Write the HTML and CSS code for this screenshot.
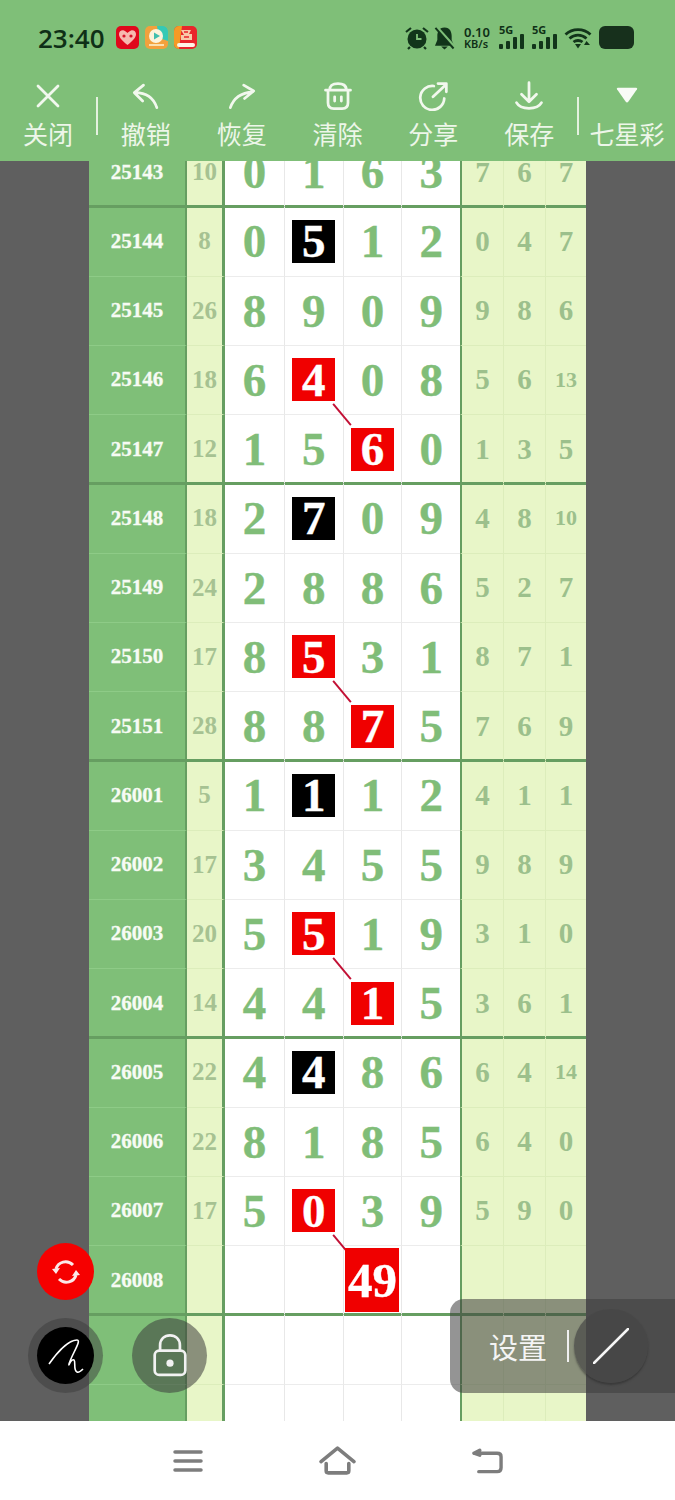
FILE: index.html
```html
<!DOCTYPE html>
<html lang="zh-CN">
<head>
  <meta charset="UTF-8" />
  <meta name="viewport" content="width=device-width, initial-scale=1.0"/>
  <title>七星彩</title>
  <link rel="stylesheet" href="styles.css">
</head>
<body>
  <header class="top">
    <div class="status">
      <span class="time">23:40</span>
      <div class="apps">
        <svg class="app" viewBox="0 0 23 23"><rect width="23" height="23" rx="5" fill="#e0081c"/><path d="M11.5 19 C5 14 3 11 3 8 C3 5 6 3.5 8 4.500 C10 5.500 11 6.500 11.500 7 C12 6.500 13 5.500 15 4.500 C17 3.500 20 5 20 8 C20 11 18 14 11.500 19Z" fill="#f7b9b0"/><circle cx="8" cy="10" r="1.600" fill="#d8142a"/><circle cx="15" cy="10" r="1.600" fill="#d8142a"/></svg>
        <svg class="app" viewBox="0 0 23 23"><rect width="23" height="23" rx="5" fill="#f3a13c"/><path d="M12 0 H18 a5 5 0 0 1 5 5 V15 L14 12Z" fill="#35c9b5"/><circle cx="11" cy="10" r="7" fill="#fdf3dc"/><path d="M9 6.500 L15 10 L9 13.500Z" fill="#41bfae"/><path d="M4 18 H19 V20 H4Z" fill="#fbe0ae"/></svg>
        <svg class="app" viewBox="0 0 23 23"><rect width="23" height="23" rx="5" fill="#e8252b"/><path d="M0 5 a5 5 0 0 1 5 -5 H8 L5 23 a5 5 0 0 1 -5 -5Z" fill="#f59a25"/><path d="M7 4 H17 L15 8 H18 V14 H7 V9 H10Z" fill="#f9c9a8"/><path d="M10 6 H14 M10 11 H15" stroke="#e8252b" stroke-width="1.500"/><rect x="3" y="17" width="18" height="4" rx="2" fill="#fff3e6"/></svg>
      </div>
      <div class="sys">
        <svg class="alarm" viewBox="0 0 24 24"><circle cx="12" cy="13" r="9.500" fill="#12351a"/><path d="M12 8 V13 H16.500" fill="none" stroke="#7fbf78" stroke-width="1.800"/><path d="M1 6 L6 2 M23 6 L18 2 M5 21 L3 23 M19 21 L21 23" stroke="#12351a" stroke-width="2.200"/></svg>
        <svg class="bell" viewBox="0 0 22 24"><path d="M11 1 C5 1 3.500 6 3.500 10 V14 L1 20 H21 L18.500 14 V10 C18.500 6 17 1 11 1Z M7.500 21 H14.500 L11 24Z" fill="#12351a"/><path d="M3 1 L21 21" stroke="#7fbf78" stroke-width="3.500"/><path d="M1.500 1.500 L20.500 23" stroke="#12351a" stroke-width="2"/></svg>
        <div class="speed"><span>0.10</span><span>KB/s</span></div>
        <div class="net">
          <span class="net-label">5G</span>
          <svg viewBox="0 0 26 16"><rect x="0" y="10" width="4" height="5" rx="1"/><rect x="7" y="7" width="4" height="8" rx="1"/><rect x="14" y="3" width="4" height="12" rx="1"/><rect x="21" y="0" width="4" height="15" rx="1"/></svg>
        </div>
        <div class="net">
          <span class="net-label">5G</span>
          <svg viewBox="0 0 26 16"><rect x="0" y="10" width="4" height="5" rx="1"/><rect x="7" y="7" width="4" height="8" rx="1"/><rect x="14" y="3" width="4" height="12" rx="1"/><rect x="21" y="0" width="4" height="15" rx="1"/></svg>
        </div>
        <svg class="wifi" viewBox="0 0 28 22"><path d="M1.500 7.500 C8.500 1 19.500 1 26.500 7.500 M5.500 11.500 C10.500 7 17.500 7 22.500 11.500 M9.500 15 C12 13 16 13 18.500 15" fill="none" stroke="#12351a" stroke-width="2.800"/><path d="M11 17 H17 L14 21.500Z" fill="#12351a"/><path d="M22.500 14 L26 18 H20Z" fill="#12351a"/></svg>
        <div class="battery"></div>
      </div>
    </div>
    <nav class="tools">
      <div class="tool">
        <svg viewBox="0 0 36 36"><path d="M6 6 L30 30 M30 6 L6 30"/></svg>
        <span>关闭</span>
      </div>
      <i class="sep"></i>
      <div class="tool">
        <svg viewBox="0 0 36 36"><path d="M31 32 C27 20 18 14 5 14 M15 5 L4 14 L14 24"/></svg>
        <span>撤销</span>
      </div>
      <div class="tool">
        <svg viewBox="0 0 36 36"><path d="M4 32 C8 20 17 14 31 13 M20 5 L32 12 L21 21"/></svg>
        <span>恢复</span>
      </div>
      <div class="tool">
        <svg viewBox="0 0 36 36"><path d="M8 11 C8 5 12 3 18 3 C24 3 28 5 28 11 M3 11 H33 M6 11 V26 C6 31 9 33 13 33 H23 C27 33 30 31 30 26 V11 M14 19 V24 M22 19 V24"/></svg>
        <span>清除</span>
      </div>
      <div class="tool">
        <svg viewBox="0 0 36 36"><path d="M19 6 A14.400 14.400 0 1 0 31.500 21 M18 19 L34 4 M24 3 H34 V13"/></svg>
        <span>分享</span>
      </div>
      <div class="tool">
        <svg viewBox="0 0 36 36"><path d="M18 2 V24 M9 16 L18 25 L27 16 M3 26 C8 35 28 35 33 26"/></svg>
        <span>保存</span>
      </div>
      <i class="sep"></i>
      <div class="tool">
        <svg viewBox="0 0 36 36"><path class="solid" d="M7 8 H29 C30 8 30.500 9 30 10 L19.500 25 C18.700 26 17.300 26 16.500 25 L6 10 C5.500 9 6 8 7 8Z"/></svg>
        <span>七星彩</span>
      </div>
    </nav>
  </header>

  <main class="main">
    <div class="sheet">
      <div class="row end"><b class="no">25143</b><b class="sum">10</b><b class="d">0</b><b class="d">1</b><b class="d">6</b><b class="d">3</b><b class="s">7</b><b class="s">6</b><b class="s">7</b></div>

      <div class="row"><b class="no">25144</b><b class="sum">8</b><b class="d">0</b><b class="d"><em class="mark black">5</em></b><b class="d">1</b><b class="d">2</b><b class="s">0</b><b class="s">4</b><b class="s">7</b></div>
      <div class="row"><b class="no">25145</b><b class="sum">26</b><b class="d">8</b><b class="d">9</b><b class="d">0</b><b class="d">9</b><b class="s">9</b><b class="s">8</b><b class="s">6</b></div>
      <div class="row"><b class="no">25146</b><b class="sum">18</b><b class="d">6</b><b class="d"><em class="mark red">4</em><svg class="link" viewBox="0 0 22 26"><path d="M1 1 L21 25"/></svg></b><b class="d">0</b><b class="d">8</b><b class="s">5</b><b class="s">6</b><b class="s small">13</b></div>
      <div class="row end"><b class="no">25147</b><b class="sum">12</b><b class="d">1</b><b class="d">5</b><b class="d"><em class="mark red">6</em></b><b class="d">0</b><b class="s">1</b><b class="s">3</b><b class="s">5</b></div>

      <div class="row"><b class="no">25148</b><b class="sum">18</b><b class="d">2</b><b class="d"><em class="mark black">7</em></b><b class="d">0</b><b class="d">9</b><b class="s">4</b><b class="s">8</b><b class="s small">10</b></div>
      <div class="row"><b class="no">25149</b><b class="sum">24</b><b class="d">2</b><b class="d">8</b><b class="d">8</b><b class="d">6</b><b class="s">5</b><b class="s">2</b><b class="s">7</b></div>
      <div class="row"><b class="no">25150</b><b class="sum">17</b><b class="d">8</b><b class="d"><em class="mark red">5</em><svg class="link" viewBox="0 0 22 26"><path d="M1 1 L21 25"/></svg></b><b class="d">3</b><b class="d">1</b><b class="s">8</b><b class="s">7</b><b class="s">1</b></div>
      <div class="row end"><b class="no">25151</b><b class="sum">28</b><b class="d">8</b><b class="d">8</b><b class="d"><em class="mark red">7</em></b><b class="d">5</b><b class="s">7</b><b class="s">6</b><b class="s">9</b></div>

      <div class="row"><b class="no">26001</b><b class="sum">5</b><b class="d">1</b><b class="d"><em class="mark black">1</em></b><b class="d">1</b><b class="d">2</b><b class="s">4</b><b class="s">1</b><b class="s">1</b></div>
      <div class="row"><b class="no">26002</b><b class="sum">17</b><b class="d">3</b><b class="d">4</b><b class="d">5</b><b class="d">5</b><b class="s">9</b><b class="s">8</b><b class="s">9</b></div>
      <div class="row"><b class="no">26003</b><b class="sum">20</b><b class="d">5</b><b class="d"><em class="mark red">5</em><svg class="link" viewBox="0 0 22 26"><path d="M1 1 L21 25"/></svg></b><b class="d">1</b><b class="d">9</b><b class="s">3</b><b class="s">1</b><b class="s">0</b></div>
      <div class="row end"><b class="no">26004</b><b class="sum">14</b><b class="d">4</b><b class="d">4</b><b class="d"><em class="mark red">1</em></b><b class="d">5</b><b class="s">3</b><b class="s">6</b><b class="s">1</b></div>

      <div class="row"><b class="no">26005</b><b class="sum">22</b><b class="d">4</b><b class="d"><em class="mark black">4</em></b><b class="d">8</b><b class="d">6</b><b class="s">6</b><b class="s">4</b><b class="s small">14</b></div>
      <div class="row"><b class="no">26006</b><b class="sum">22</b><b class="d">8</b><b class="d">1</b><b class="d">8</b><b class="d">5</b><b class="s">6</b><b class="s">4</b><b class="s">0</b></div>
      <div class="row"><b class="no">26007</b><b class="sum">17</b><b class="d">5</b><b class="d"><em class="mark red">0</em><svg class="link" viewBox="0 0 22 26"><path d="M1 1 L21 25"/></svg></b><b class="d">3</b><b class="d">9</b><b class="s">5</b><b class="s">9</b><b class="s">0</b></div>
      <div class="row end"><b class="no">26008</b><b class="sum"></b><b class="d"></b><b class="d"></b><b class="d"><em class="mark red big">49</em></b><b class="d"></b><b class="s"></b><b class="s"></b><b class="s"></b></div>

      <div class="row"><b class="no"></b><b class="sum"></b><b class="d"></b><b class="d"></b><b class="d"></b><b class="d"></b><b class="s"></b><b class="s"></b><b class="s"></b></div>
      <div class="row"><b class="no"></b><b class="sum"></b><b class="d"></b><b class="d"></b><b class="d"></b><b class="d"></b><b class="s"></b><b class="s"></b><b class="s"></b></div>
    </div>

    <div class="fab refresh">
      <svg viewBox="0 0 32 32"><path d="M6 13 C8 6 17 3 23 9 M26 19 C24 26 15 29 9 23"/><path class="solid" d="M2 13 L10 12 L6 18Z M30 19 L22 20 L26 14Z"/></svg>
    </div>
    <div class="fab pen">
      <svg viewBox="0 0 36 36"><path d="M1 26 C8 16 20 2 29 2 C34 2 24 16 21 26 C20 30 23 20 26 22 C28 24 25 32 29 34 C31 35 33 33 35 31"/></svg>
    </div>
    <div class="fab lock">
      <svg viewBox="0 0 40 50"><path d="M9 19 V13 C9 6 14 2 20 2 C26 2 31 6 31 13 V19"/><rect x="3" y="19" width="34" height="27" rx="5"/><circle class="solid" cx="20" cy="33" r="4"/></svg>
    </div>
    <div class="panel">
      <span class="panel-text">设置</span>
      <i class="panel-sep"></i>
      <div class="line-btn">
        <svg viewBox="0 0 36 36"><path d="M1 35 L35 1"/></svg>
      </div>
    </div>
  </main>

  <footer class="nav">
    <svg class="menu" viewBox="0 0 30 24"><path d="M2 3 H28 M2 12 H28 M2 21 H28"/></svg>
    <svg class="home" viewBox="0 0 36 28"><path d="M2 15 L18 2 L34 15 M7 17 V24 C7 25.500 8 26 9 26 H27 C28 26 29 25.500 29 24 V17"/></svg>
    <svg class="back" viewBox="0 0 32 26"><path d="M2 5 L8 2 M2 5 L8 7 M3 5 H26 C28.500 5 30 6 30 8.500 V20 C30 22.500 28.500 24 26 24 H7"/></svg>
  </footer>
</body>
</html>
```

FILE: styles.css
```css
* {
  box-sizing: border-box;
}
body {
  margin: 0;
  width: 675px;
  height: 1500px;
  overflow: hidden;
  display: flex;
  flex-direction: column;
  font-family: "Noto Sans CJK SC", "Noto Sans", sans-serif;
  background: white;
}

/* status bar + toolbar */
.top {
  height: 161px;
  background-color: #7fbf78;
  flex: none;
}
.status {
  height: 75px;
  padding: 0 41px 0 38px;
  display: flex;
  align-items: center;
  color: #0f3017;
}
.time {
  font-family: "Open Sans", sans-serif;
  font-size: 26px;
  font-weight: 600;
  width: 78px;
}
.apps {
  display: flex;
  gap: 6px;
}
.app {
  width: 23px;
  height: 23px;
}
.sys {
  margin-left: auto;
  display: flex;
  align-items: center;
}
.alarm {
  width: 24px;
  height: 24px;
}
.bell {
  width: 21px;
  height: 24px;
  margin-left: 5px;
}
.speed {
  margin-left: 9px;
  width: 28px;
  display: flex;
  flex-direction: column;
  font-family: "Noto Sans", sans-serif;
  font-size: 13px;
  font-weight: 600;
  line-height: 12px;
  white-space: nowrap;
}
.speed span:last-child {
  font-size: 11px;
}
.net {
  width: 26px;
  height: 24px;
  margin-left: 7px;
  position: relative;
  display: flex;
  align-items: flex-end;
}
.net svg {
  width: 26px;
  height: 16px;
  fill: #12351a;
}
.net-label {
  position: absolute;
  left: 0;
  top: -2px;
  font-family: "Noto Sans", sans-serif;
  font-size: 11px;
  font-weight: 700;
  line-height: 12px;
}
.wifi {
  width: 28px;
  height: 22px;
  margin-left: 6px;
}
.battery {
  width: 35px;
  height: 23px;
  margin-left: 7px;
  background: #17301c;
  border-radius: 6px;
}

.tools {
  display: flex;
  height: 86px;
  color: #edf6e9;
}
.tool {
  flex: 1;
  display: flex;
  flex-direction: column;
  align-items: center;
}
.tool svg {
  width: 30px;
  height: 30px;
  margin-top: 6px;
  fill: none;
  stroke: #f2f8ee;
  stroke-width: 3.300;
  stroke-linecap: round;
  stroke-linejoin: round;
}
.tool svg .solid {
  fill: #f8fbf6;
  stroke: none;
}
.tool span {
  font-size: 25px;
  line-height: 34px;
  margin-top: 5px;
  white-space: nowrap;
}
.sep {
  flex: none;
  width: 2px;
  height: 38px;
  margin-top: 22px;
  background: #e4f1df;
}

/* lottery chart */
.main {
  flex: 1;
  position: relative;
  overflow: hidden;
  background-color: #5f5f5f;
}
.sheet {
  width: 497px;
  margin: -23px 0 0 89px;
}
.row {
  height: 69.25px;
  display: grid;
  grid-template-columns: 98px 38px repeat(4, 58.75px) 43px 42px 41px;
  font-family: "Liberation Serif", serif;
}
.row b {
  display: flex;
  align-items: center;
  justify-content: center;
  position: relative;
  border-bottom: 1px solid #ececec;
}
.no {
  background: #7fbf78;
  color: #f7fbf4;
  font-size: 21px;
  border-right: 2px solid #669e61;
  border-bottom-color: #8ecb87 !important;
  -webkit-text-stroke: 0.3px #f7fbf4;
}
.sum {
  background: #e8f6c8;
  color: #a6c292;
  font-size: 25px;
  border-right: 3px solid #669e61;
  border-bottom-color: #dcedbb !important;
}
.d {
  background: white;
  color: #80bd78;
  font-size: 47px;
  -webkit-text-stroke: 0.4px #80bd78;
}
.d + .d {
  border-left: 1px solid #e8e8e8;
}
.s {
  background: #e8f6c8;
  color: #9cc08c;
  font-size: 29px;
  border-left: 1px solid #dcedbb;
  border-bottom-color: #dcedbb !important;
}
.d + .s {
  border-left: 2px solid #669e61;
}
.s.small {
  font-size: 22px;
}
/* thick group line sits across the row edge, the digits stay centred */
.row.end b {
  border-bottom-color: #669e61 !important;
  box-shadow: inset 0 -1px 0 #669e61;
}
.row.end + .row b {
  box-shadow: inset 0 1px 0 #669e61;
}

.mark {
  width: 43px;
  height: 43px;
  display: flex;
  align-items: center;
  justify-content: center;
  font-style: normal;
  color: white;
  -webkit-text-stroke: 0.4px white;
  position: relative;
  z-index: 2;
}
.mark.black {
  background: black;
}
.mark.red {
  background: #f00000;
}
.mark.big {
  width: 54px;
  height: 64px;
  font-size: 49px;
}
.link {
  position: absolute;
  left: 47px;
  top: 57px;
  width: 20px;
  height: 23px;
  z-index: 1;
  stroke: #c21035;
  stroke-width: 2.200;
}

/* floating buttons */
.fab {
  position: absolute;
  border-radius: 50%;
  display: flex;
  align-items: center;
  justify-content: center;
}
.refresh {
  left: 37px;
  top: 1082px;
  width: 57px;
  height: 57px;
  background: #f60000;
}
.refresh svg {
  width: 32px;
  height: 32px;
  fill: none;
  stroke: #fbe9e9;
  stroke-width: 3;
}
.refresh .solid {
  fill: #fbe9e9;
  stroke: none;
}
.pen {
  left: 37px;
  top: 1166px;
  width: 57px;
  height: 57px;
  background: black;
  box-shadow: 0 0 0 9px rgba(60,60,60,0.5);
}
.pen svg {
  width: 36px;
  height: 36px;
  fill: none;
  stroke: white;
  stroke-width: 1.600;
}
.lock {
  left: 132px;
  top: 1157px;
  width: 75px;
  height: 75px;
  background: rgba(60,60,60,0.55);
}
.lock svg {
  width: 36px;
  height: 46px;
  fill: none;
  stroke: #f2f2f2;
  stroke-width: 3;
}
.lock .solid {
  fill: #f2f2f2;
  stroke: none;
}
.panel {
  position: absolute;
  left: 450px;
  top: 1138px;
  width: 225px;
  height: 94px;
  background: rgba(60,60,60,0.55);
  border-radius: 14px 0 0 14px;
  display: flex;
  align-items: center;
  padding-left: 39px;
  color: #f4f4f4;
}
.panel-text {
  font-size: 29px;
  line-height: 34px;
}
.panel-sep {
  width: 2px;
  height: 32px;
  margin-left: 20px;
  background: #f0f0f0;
}
.line-btn {
  width: 74px;
  height: 74px;
  margin-left: 5px;
  border-radius: 50%;
  background: rgba(70,70,70,0.7);
  box-shadow: 0 2px 2px rgba(40,40,40,0.5);
  display: flex;
  align-items: center;
  justify-content: center;
}
.line-btn svg {
  width: 36px;
  height: 36px;
  stroke: #f6f6f6;
  stroke-width: 2.500;
  stroke-linecap: round;
}

/* bottom nav */
.nav {
  height: 79px;
  flex: none;
  background: white;
  display: flex;
  align-items: center;
  justify-content: space-between;
  padding: 0 172px 0 173px;
}
.nav svg {
  fill: none;
  stroke: #7d7d7d;
  stroke-width: 3.500;
  stroke-linecap: round;
  stroke-linejoin: round;
}
.menu {
  width: 30px;
  height: 24px;
}
.home {
  width: 37px;
  height: 29px;
}
.back {
  width: 31px;
  height: 26px;
}
```
